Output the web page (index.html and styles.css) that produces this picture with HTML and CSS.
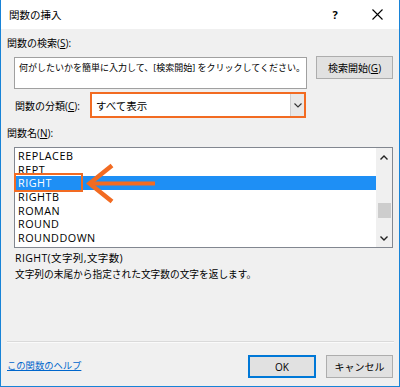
FILE: index.html
```html
<!DOCTYPE html>
<html lang="ja">
<head>
  <meta charset="UTF-8">
  <title>関数の挿入</title>
  <link rel="stylesheet" href="styles.css">
</head>
<body>
  <div class="dialog">
    <div class="titlebar">
      <span class="title">関数の挿入</span>
      <span class="help">?</span>
      <span class="close">
        <svg width="11" height="11" viewBox="0 0 11 11"><path d="M0.5 0.5L10.5 10.5M10.5 0.5L0.5 10.5" stroke="#000" stroke-width="1.1"/></svg>
      </span>
    </div>

    <div class="content">
      <div class="label">関数の検索(<u>S</u>):</div>
      <div class="search-row">
        <div class="search-box">何がしたいかを簡単に入力して、[検索開始] をクリックしてください。</div>
        <button class="btn search-btn">検索開始(<u>G</u>)</button>
      </div>

      <div class="category-row">
        <span class="cat-label">関数の分類(<u>C</u>):</span>
        <div class="select">
          <span class="select-value">すべて表示</span>
          <span class="select-arrow">
            <svg width="8" height="5" viewBox="0 0 8 5"><path d="M0.5 0.5L4 4L7.5 0.5" fill="none" stroke="#333" stroke-width="1.1"/></svg>
          </span>
        </div>
      </div>

      <div class="label names-label">関数名(<u>N</u>):</div>
      <div class="list">
        <ul class="items">
          <li>REPLACEB</li>
          <li>REPT</li>
          <li class="selected">RIGHT</li>
          <li>RIGHTB</li>
          <li>ROMAN</li>
          <li>ROUND</li>
          <li>ROUNDDOWN</li>
        </ul>
        <div class="scrollbar">
          <svg class="sb-up" width="8" height="5" viewBox="0 0 8 5"><path d="M0.5 4.5L4 1L7.5 4.5" fill="none" stroke="#222" stroke-width="1.4"/></svg>
          <div class="thumb"></div>
          <svg class="sb-down" width="8" height="5" viewBox="0 0 8 5"><path d="M0.5 0.5L4 4L7.5 0.5" fill="none" stroke="#222" stroke-width="1.4"/></svg>
        </div>
        <div class="mark-box"></div>
        <svg class="mark-arrow" width="72" height="42" viewBox="0 0 72 42">
          <path d="M26 2.5L3.5 20.5L26 38.5" fill="none" stroke="#f26b22" stroke-width="4.5"/>
          <path d="M5 20.5H69" stroke="#f26b22" stroke-width="4"/>
        </svg>
      </div>

      <div class="desc syntax">RIGHT(文字列,文字数)</div>
      <div class="desc">文字列の末尾から指定された文字数の文字を返します。</div>

      <div class="footer">
        <div class="separator"></div>
        <div class="footer-row">
          <a class="help-link" href="#">この関数のヘルプ</a>
          <button class="btn ok-btn">OK</button>
          <button class="btn cancel-btn">キャンセル</button>
        </div>
      </div>
    </div>
  </div>
</body>
</html>
```

FILE: styles.css
```css
body {
  margin: 0;
  background: #fff;
}
.dialog {
  width: 400px;
  height: 387px;
  box-sizing: border-box;
  border: 1px solid #1883d7;
  border-top: 0;
  background: #f0f0f0;
  display: flex;
  flex-direction: column;
  font-family: "Open Sans", "Noto Sans CJK JP", sans-serif;
  font-size: 10px;
  color: #000;
}
u {
  text-underline-offset: 1px;
}

.titlebar {
  height: 29px;
  flex: none;
  background: #fff;
  display: flex;
  align-items: center;
  padding-left: 8px;
}
.title {
  font-size: 10.5px;
  flex: 1;
}
.help {
  font-weight: bold;
  font-size: 11px;
  width: 12px;
  margin-right: 31px;
  text-align: center;
}
.close {
  width: 11px;
  height: 11px;
  margin-right: 16px;
  display: flex;
}

.content {
  flex: 1;
  display: flex;
  flex-direction: column;
  padding: 0 5px 8px 6px;
}
.label {
  line-height: 14px;
  margin-top: 7px;
}

.search-row {
  display: flex;
  align-items: flex-start;
  margin-top: 6px;
}
.search-box {
  margin: 1px 0 0 7px;
  width: 293px;
  height: 32px;
  box-sizing: border-box;
  background: #fff;
  border: 1px solid #a0a0a0;
  padding: 3px 0 0 4px;
  line-height: 14px;
  font-size: 9px;
  white-space: nowrap;
  overflow: hidden;
}
.btn {
  font-family: inherit;
  font-size: 10px;
  color: #000;
  background: #e1e1e1;
  border: 1px solid #adadad;
  padding: 0;
  height: 23px;
}
.search-btn {
  width: 77px;
  margin-left: 9px;
}

.category-row {
  display: flex;
  align-items: center;
  margin-top: 3px;
}
.cat-label {
  width: 73px;
  padding-left: 8px;
  margin-right: 2px;
  white-space: nowrap;
}
.select {
  width: 216px;
  height: 26px;
  box-sizing: border-box;
  border: 2px solid #f26b22;
  background: #fff;
  display: flex;
  align-items: stretch;
}
.select-value {
  flex: 1;
  padding-left: 4px;
  display: flex;
  align-items: center;
  font-size: 10.5px;
}
.select-arrow {
  width: 13px;
  background: #e8e8e8;
  border-left: 1px solid #cfcfcf;
  display: flex;
  align-items: center;
  justify-content: center;
}

.names-label {
  margin-top: 8px;
}
.list {
  position: relative;
  margin: 7px 0 0 7px;
  width: 379px;
  height: 101px;
  box-sizing: border-box;
  border: 1px solid #828790;
  background: #fff;
  display: flex;
}
.items {
  flex: 1;
  list-style: none;
  margin: 0;
  padding: 1px 0 0;
}
.items li {
  height: 13.7px;
  line-height: 13.7px;
  padding-left: 3px;
  font-size: 10.8px;
  letter-spacing: 0.5px;
}
.items li.selected {
  background: #1e8ff5;
  color: #fff;
}
.scrollbar {
  width: 16px;
  background: #f0f0f0;
  display: flex;
  flex-direction: column;
  align-items: center;
}
.sb-up {
  margin-top: 7px;
}
.thumb {
  width: 13px;
  height: 15px;
  background: #cdcdcd;
  margin-top: 43px;
}
.sb-down {
  margin-top: 18px;
}
.mark-box {
  position: absolute;
  left: -1px;
  top: 25px;
  width: 69px;
  height: 19px;
  box-sizing: border-box;
  border: 2px solid #f26b22;
}
.mark-arrow {
  position: absolute;
  left: 71px;
  top: 15px;
}

.desc {
  padding-left: 8px;
  line-height: 14px;
  margin-top: 3px;
  font-size: 9.7px;
}
.syntax {
  font-size: 10.5px;
  letter-spacing: 0.4px;
}

.footer {
  margin-top: auto;
}
.separator {
  height: 1px;
  background: #dadada;
  border-bottom: 1px solid #fafafa;
}
.footer-row {
  display: flex;
  align-items: center;
  margin-top: 12px;
  padding-right: 1px;
}
.help-link {
  color: #0066cc;
  font-size: 9.3px;
  margin-right: auto;
  margin-top: -4px;
}
.ok-btn {
  width: 68px;
  border: 2px solid #0078d7;
}
.cancel-btn {
  width: 67px;
  margin-left: 10px;
}
```
